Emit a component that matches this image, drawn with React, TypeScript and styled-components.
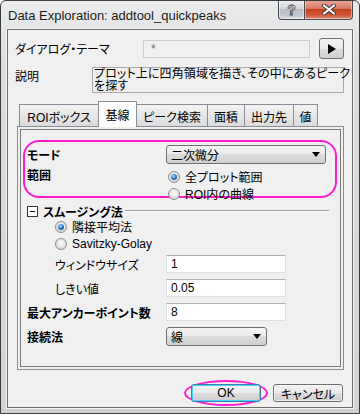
import React from "react";
import styled, { createGlobalStyle } from "styled-components";

const UI_FONT = `"Liberation Sans", "Noto Sans CJK JP", sans-serif`;
const MARK = "#ff1ccf";

const GlobalStyle = createGlobalStyle`
  html, body { margin: 0; padding: 0; background: #fff; }
  body {
    font-family: ${UI_FONT};
    font-size: 12px;
    font-feature-settings: "palt";
    color: #000;
  }
  * { box-sizing: border-box; }
`;

const Window = styled.div`
  width: 360px;
  height: 414px;
  display: flex;
  flex-direction: column;
  border: 1px solid #3c3c3c;
  border-radius: 6px 6px 0 0;
  background: linear-gradient(#ebeced, #dcdddf 60px, #d2d3d5);
  overflow: hidden;
`;

const TitleBar = styled.div`
  height: 28px;
  flex: none;
  display: flex;
  align-items: flex-start;
`;

const Title = styled.span`
  flex: 1;
  padding: 6px 0 0 7px;
  font-family: "Liberation Sans", sans-serif;
  font-size: 13px;
  line-height: 17px;
  color: #1b1b1b;
  white-space: nowrap;
`;

const CaptionButtons = styled.div`
  display: flex;
  margin: -1px 6px 0 0;
`;

const CaptionButton = styled.div<{ $close?: boolean }>`
  width: ${(p) => (p.$close ? 48 : 27)}px;
  height: 20px;
  display: flex;
  align-items: center;
  justify-content: center;
  border: 1px solid #4a4a4a;
  border-top: none;
  border-left: ${(p) => (p.$close ? "none" : "1px solid #4a4a4a")};
  border-radius: ${(p) => (p.$close ? "0 0 4px 0" : "0 0 0 4px")};
  background: ${(p) =>
    p.$close
      ? "linear-gradient(#eaa999, #d67861 45%, #c4401f 50%, #d0563a 80%, #e49078)"
      : "linear-gradient(#eef0f2, #d4d8dd 45%, #b9bec5 50%, #c3c8ce 80%, #dfe2e6)"};
  box-shadow: inset 0 0 0 1px rgba(255, 255, 255, 0.45);
  color: #fff;
  font-family: "Liberation Sans", sans-serif;
  font-weight: bold;
  font-size: 14px;
  -webkit-text-stroke: 0.8px #3a3a3a;
`;

const Client = styled.div`
  flex: 1;
  margin: 0 6px 5px;
  border: 1px solid #6c6c6c;
  box-shadow: 0 0 0 1px #f3f3f3;
  background: #f0f0f0;
  padding: 8px 8px 0 7px;
  display: flex;
  flex-direction: column;
`;

const Row = styled.div`
  display: flex;
  align-items: center;
`;

const TopLabel = styled.span<{ $w: number }>`
  width: ${(p) => p.$w}px;
  flex: none;
  white-space: nowrap;
`;

const ThemeBox = styled.div`
  width: 167px;
  height: 18px;
  border: 1px solid #c9cdd2;
  background: #f0f0f0;
  color: #6d6d6d;
  padding: 1px 0 0 7px;
  line-height: 15px;
`;

const IconButton = styled.div`
  width: 25px;
  height: 21px;
  margin-left: 9px;
  display: flex;
  align-items: center;
  justify-content: center;
  border: 1px solid #707070;
  border-radius: 3px;
  background: linear-gradient(#f2f2f2, #ebebeb 50%, #dddddd 50%, #cfcfcf);
`;

const DescRow = styled.div`
  display: flex;
  align-items: flex-start;
  margin-top: 8px;
`;

const DescBox = styled.div`
  flex: 1;
  min-width: 0;
  height: 26px;
  border: 1px solid #a8a8a8;
  padding: 0 0 0 1px;
  font-size: 12px;
  letter-spacing: 0.1px;
`;

const DescLine = styled.span`
  display: block;
  height: 12px;
  line-height: 12px;
  white-space: nowrap;
`;

const TabArea = styled.div`
  margin: 8px 0 0 2px;
  display: flex;
  flex-direction: column;
`;

const TabStrip = styled.div`
  height: 26px;
  margin-bottom: -1px;
  padding-left: 2px;
  display: flex;
  align-items: flex-end;
  position: relative;
  z-index: 1;
`;

const Tab = styled.div<{ $w: number; $active?: boolean }>`
  width: ${(p) => p.$w}px;
  height: ${(p) => (p.$active ? 26 : 22)}px;
  margin-bottom: ${(p) => (p.$active ? 0 : 1)}px;
  margin-left: -1px;
  &:first-child { margin-left: 0; }
  display: flex;
  align-items: center;
  justify-content: center;
  border: 1px solid #898c95;
  border-bottom: none;
  background: ${(p) => (p.$active ? "#fff" : "linear-gradient(#f3f3f3, #e6e6e6 50%, #dcdcdc)")};
  position: relative;
  z-index: ${(p) => (p.$active ? 2 : 0)};
  white-space: nowrap;
  padding-top: ${(p) => (p.$active ? 0 : 1)}px;
`;

const TabPanel = styled.div`
  height: 244px;
  border: 1px solid #898c95;
  padding: 2px;
  display: flex;
`;

const PanelFrame = styled.div`
  flex: 1;
  border: 1px solid #7b7b7b;
  display: flex;
  flex-direction: column;
`;

const Highlight = styled.div`
  height: 58px;
  margin: 10px 3px 0 2px;
  padding: 3px 9px 0 2px;
  border: 2px solid ${MARK};
  border-radius: 16px;
`;

const FieldLabel = styled.span<{ $w: number; $indent?: number; $bold?: boolean }>`
  width: ${(p) => p.$w}px;
  flex: none;
  padding-left: ${(p) => p.$indent ?? 0}px;
  font-weight: ${(p) => (p.$bold ? "bold" : "normal")};
  white-space: nowrap;
`;

const RangeRow = styled.div`
  display: flex;
  margin-top: 4px;
`;

const RangeLabel = styled(FieldLabel)`
  line-height: 17px;
`;

const RadioList = styled.div<{ $indent?: number }>`
  display: flex;
  flex-direction: column;
  padding-left: ${(p) => p.$indent ?? 0}px;
`;

const RadioRow = styled.label`
  height: 17px;
  display: flex;
  align-items: center;
  gap: 5px;
  white-space: nowrap;
`;

const RadioDot = styled.span<{ $on?: boolean }>`
  width: 12px;
  height: 12px;
  flex: none;
  border-radius: 50%;
  border: 1px solid #8f8f8f;
  background: radial-gradient(circle at 50% 40%, #fdfdfd, #d8d8d8 75%, #c8c8c8);
  display: flex;
  align-items: center;
  justify-content: center;
  &::after {
    content: "";
    display: ${(p) => (p.$on ? "block" : "none")};
    width: 6px;
    height: 6px;
    border-radius: 50%;
    background: radial-gradient(circle at 40% 35%, #9fd8ff, #1d66b4 60%, #0d3f7c);
  }
`;

const Select = styled.div<{ $w: number }>`
  width: ${(p) => p.$w}px;
  height: 19px;
  display: flex;
  align-items: center;
  justify-content: space-between;
  padding: 0 5px 0 4px;
  border: 1px solid #707070;
  border-radius: 3px;
  background: linear-gradient(#f3f3f3, #ebebeb 50%, #dddddd 50%, #d0d0d0);
  white-space: nowrap;
`;

const SectionHeader = styled.div`
  height: 14px;
  margin-top: 6px;
  padding: 0 11px 0 6px;
  display: flex;
  align-items: center;
  font-weight: bold;
`;

const CollapseBox = styled.span`
  width: 11px;
  height: 11px;
  flex: none;
  margin-right: 5px;
  border: 1px solid #333;
  background: #fff;
  display: flex;
  align-items: center;
  justify-content: center;
  &::after {
    content: "";
    width: 5px;
    height: 1px;
    background: #000;
  }
`;

const Rule = styled.span`
  flex: 1;
  height: 2px;
  margin-left: 2px;
  border-top: 1px solid #a0a0a0;
  border-bottom: 1px solid #fff;
`;

const Fields = styled.div`
  display: flex;
  flex-direction: column;
  gap: 6px;
  margin-top: 3px;
`;

const TextInput = styled.div`
  width: 120px;
  height: 18px;
  border: 1px solid #dbdfe6;
  border-top-color: #abadb3;
  background: #fff;
  padding: 0 0 0 4px;
  line-height: 16px;
`;

const ButtonBar = styled.div`
  margin: 10px 1px 0 0;
  display: flex;
  justify-content: flex-end;
  align-items: center;
`;

const OkRing = styled.div`
  width: 84px;
  height: 26px;
  border: 2px solid ${MARK};
  border-radius: 50%;
  display: flex;
  align-items: center;
  justify-content: center;
`;

const PushButton = styled.div<{ $default?: boolean }>`
  width: 70px;
  height: 18px;
  margin-left: ${(p) => (p.$default ? 0 : 5)}px;
  display: flex;
  align-items: center;
  justify-content: center;
  border: 1px solid ${(p) => (p.$default ? "#3c7fb1" : "#707070")};
  border-radius: 3px;
  background: linear-gradient(#f2f2f2, #ebebeb 50%, #dddddd 50%, #cfcfcf);
  box-shadow: ${(p) => (p.$default ? "inset 0 0 0 1px #48d0ff" : "inset 0 0 0 1px rgba(255,255,255,0.6)")};
  white-space: nowrap;
`;

const DownArrow = () => (
  <svg width="8" height="5" viewBox="0 0 8 5">
    <path d="M0 0h8L4 5z" fill="#000" />
  </svg>
);

const tabs = [
  { label: "ROIボックス", w: 80 },
  { label: "基線", w: 39, active: true },
  { label: "ピーク検索", w: 72 },
  { label: "面積", w: 38 },
  { label: "出力先", w: 50 },
  { label: "値", w: 25 },
];

const fields = [
  { label: "ウィンドウサイズ", value: "1", indent: 34 },
  { label: "しきい値", value: "0.05", indent: 34 },
  { label: "最大アンカーポイント数", value: "8", indent: 6, bold: true },
];

const App: React.FC = () => (
  <>
    <GlobalStyle />
    <Window>
      <TitleBar>
        <Title>Data Exploration: addtool_quickpeaks</Title>
        <CaptionButtons>
          <CaptionButton>?</CaptionButton>
          <CaptionButton $close>
            <svg width="14" height="11" viewBox="0 0 14 11">
              <path d="M2 1.5l10 8M12 1.5l-10 8" stroke="#3a3a3a" strokeWidth="4" strokeLinecap="round" />
              <path d="M2 1.5l10 8M12 1.5l-10 8" stroke="#fff" strokeWidth="2.2" strokeLinecap="round" />
            </svg>
          </CaptionButton>
        </CaptionButtons>
      </TitleBar>

      <Client>
        <Row>
          <TopLabel $w={128}>ダイアログ・テーマ</TopLabel>
          <ThemeBox>*</ThemeBox>
          <IconButton>
            <svg width="8" height="10" viewBox="0 0 8 10">
              <path d="M0 0l8 5-8 5z" fill="#000" />
            </svg>
          </IconButton>
        </Row>

        <DescRow>
          <TopLabel $w={77}>説明</TopLabel>
          <DescBox>
            <DescLine>プロット上に四角領域を描き、その中にあるピーク</DescLine>
            <DescLine>を探す</DescLine>
          </DescBox>
        </DescRow>

        <TabArea>
          <TabStrip>
            {tabs.map((t) => (
              <Tab key={t.label} $w={t.w} $active={t.active}>
                {t.label}
              </Tab>
            ))}
          </TabStrip>
          <TabPanel>
            <PanelFrame>
              <Highlight>
                <Row>
                  <FieldLabel $w={139} $bold>モード</FieldLabel>
                  <Select $w={160}>
                    二次微分
                    <DownArrow />
                  </Select>
                </Row>
                <RangeRow>
                  <RangeLabel $w={141} $bold>範囲</RangeLabel>
                  <RadioList>
                    <RadioRow>
                      <RadioDot $on />
                      全プロット範囲
                    </RadioRow>
                    <RadioRow>
                      <RadioDot />
                      ROI内の曲線
                    </RadioRow>
                  </RadioList>
                </RangeRow>
              </Highlight>

              <SectionHeader>
                <CollapseBox />
                スムージング法
                <Rule />
              </SectionHeader>
              <RadioList $indent={34}>
                <RadioRow>
                  <RadioDot $on />
                  隣接平均法
                </RadioRow>
                <RadioRow>
                  <RadioDot />
                  Savitzky-Golay
                </RadioRow>
              </RadioList>

              <Fields>
                {fields.map((f) => (
                  <Row key={f.label}>
                    <FieldLabel $w={145} $indent={f.indent} $bold={f.bold}>
                      {f.label}
                    </FieldLabel>
                    <TextInput>{f.value}</TextInput>
                  </Row>
                ))}
                <Row>
                  <FieldLabel $w={145} $indent={6} $bold>
                    接続法
                  </FieldLabel>
                  <Select $w={101}>
                    線
                    <DownArrow />
                  </Select>
                </Row>
              </Fields>
            </PanelFrame>
          </TabPanel>
        </TabArea>

        <ButtonBar>
          <OkRing>
            <PushButton $default>OK</PushButton>
          </OkRing>
          <PushButton>キャンセル</PushButton>
        </ButtonBar>
      </Client>
    </Window>
  </>
);

export default App;
